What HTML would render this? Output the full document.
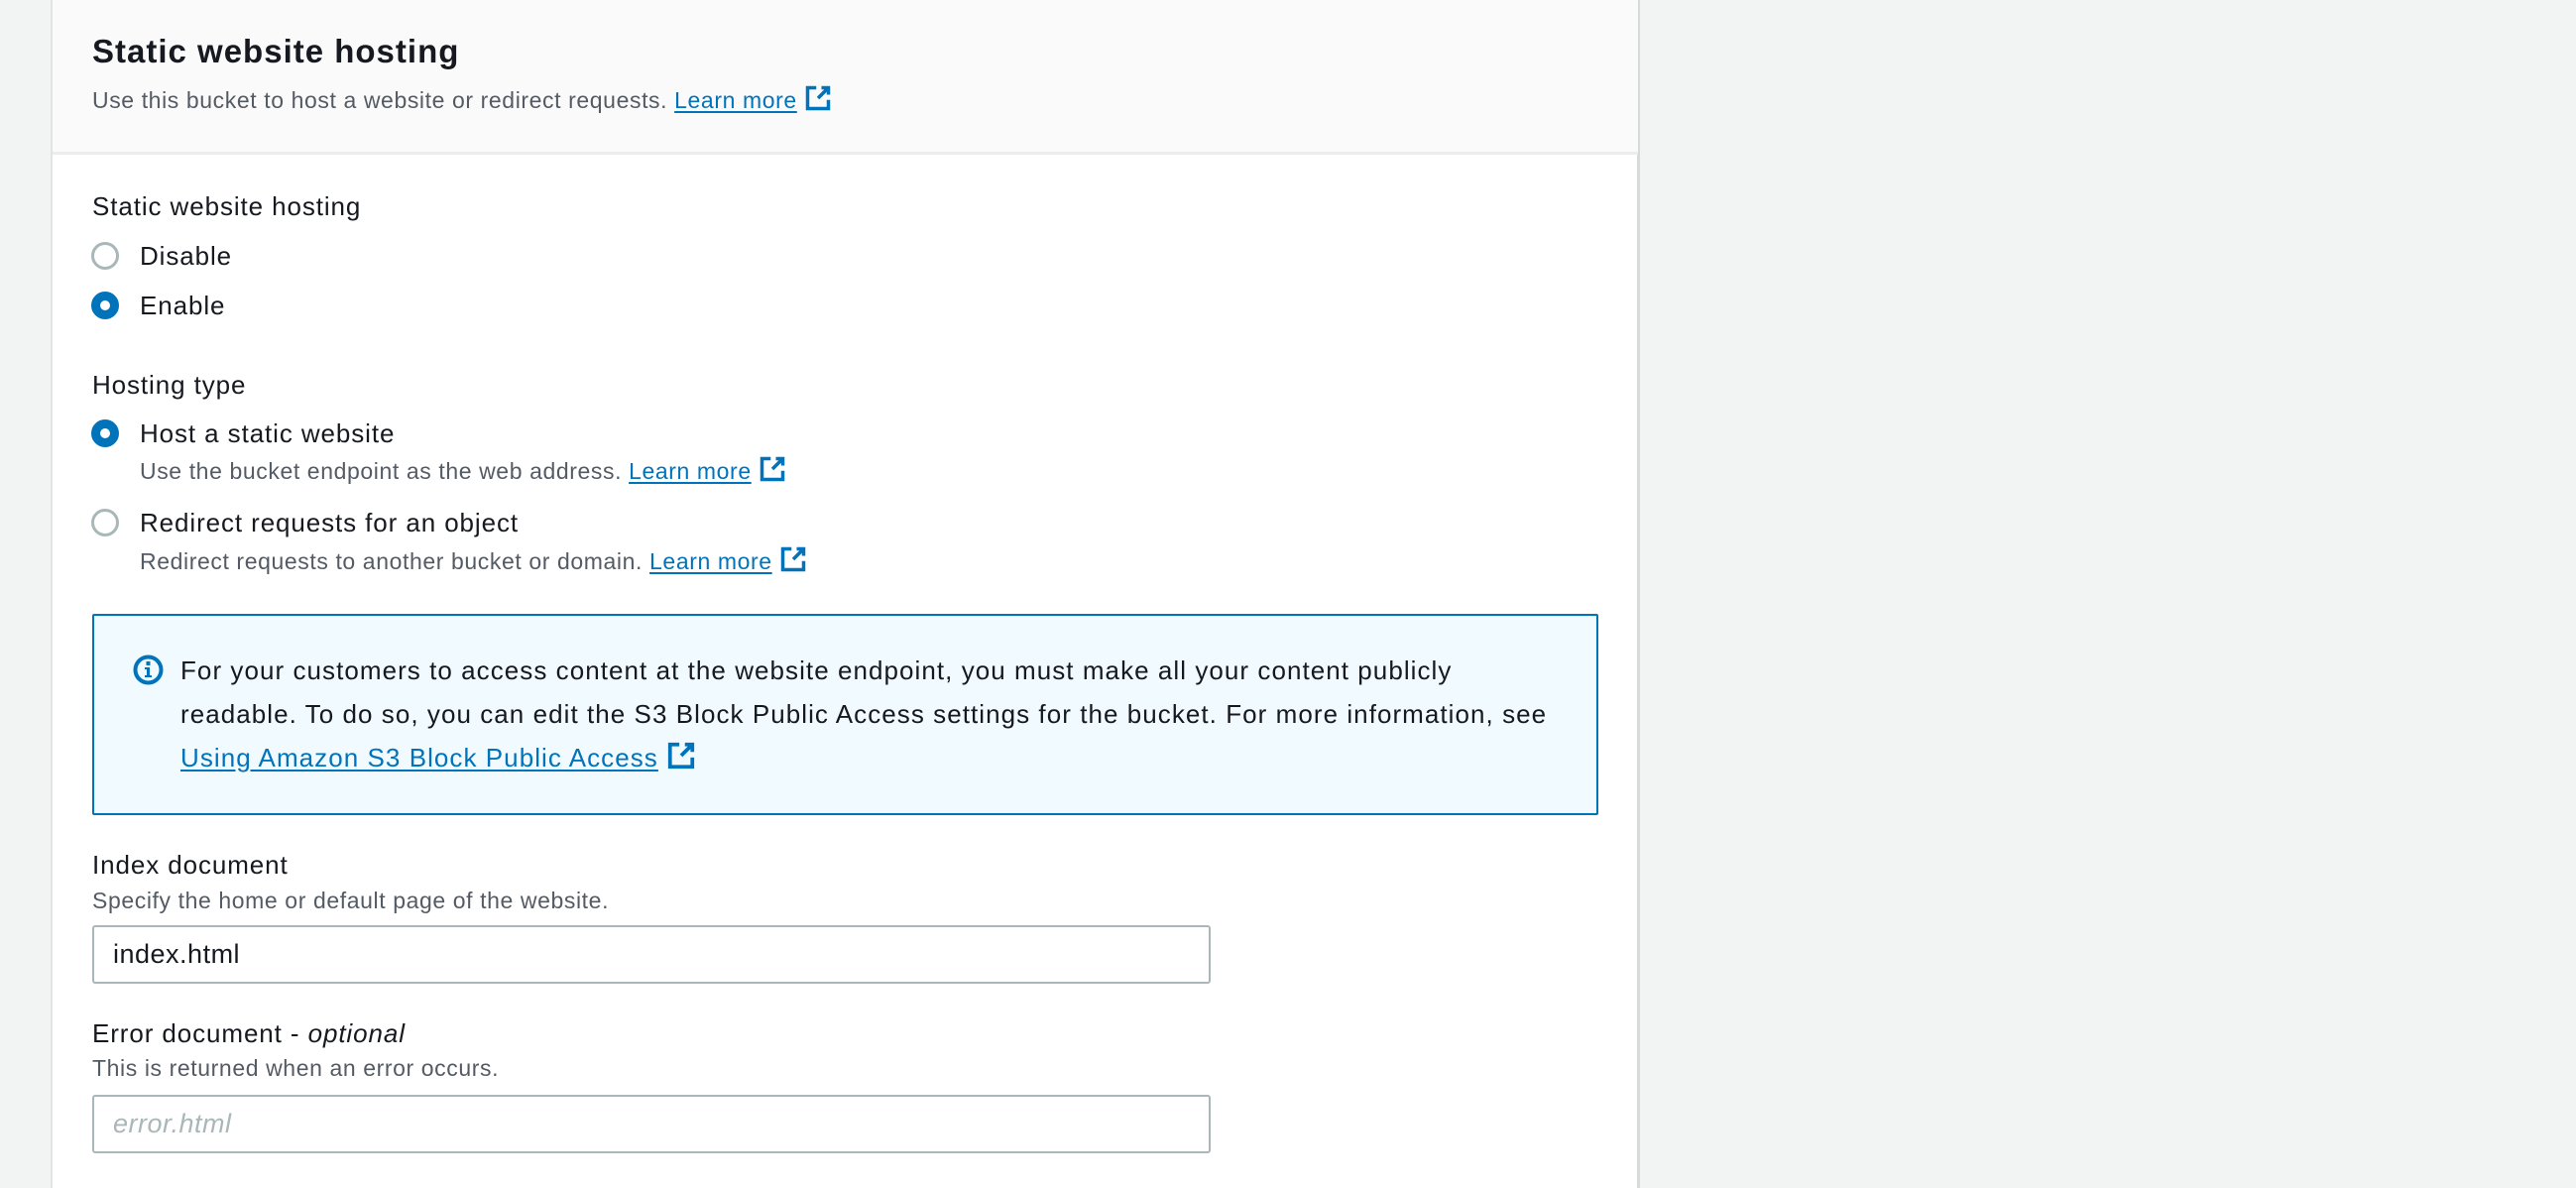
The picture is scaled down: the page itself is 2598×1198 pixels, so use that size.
<!DOCTYPE html>
<html><head><meta charset="utf-8"><style>
*{margin:0;padding:0;box-sizing:border-box}
body{width:2598px;height:1188px;background:#f2f3f3;font-family:"Liberation Sans",sans-serif;color:#16191f;position:relative;overflow:hidden}
.panel{position:absolute;left:51px;top:-2px;width:1603px;height:1200px;background:#fff;border-left:2px solid #e1e4e4;border-right:3px solid #d5dbdb}
.head{position:absolute;left:0;top:0;width:100%;height:156px;background:#fafafa;border-bottom:3px solid #eaeded}
.t{position:absolute;white-space:nowrap;letter-spacing:0.9px}
.g{color:#545b64;letter-spacing:0.6px}
a{color:#0073bb;text-decoration:underline;text-underline-offset:3px}
.r{position:absolute;width:28px;height:28px;border-radius:50%;border:3px solid #aab7b8;background:#fff}
.r.on{border:9px solid #0073bb}
.inp{position:absolute;left:93px;width:1128px;height:59px;border:2px solid #aab7b8;border-radius:3px;background:#fff;font-size:27px;padding-left:19px;line-height:55px;letter-spacing:0.5px}
</style></head><body>
<div class="panel"></div>
<div class="head" style="left:53px;width:1599px"></div>
<div class="t" style="left:93px;top:33px;font-size:33px;font-weight:bold;letter-spacing:1px">Static website hosting</div>
<div class="t g" style="left:93px;top:85px;font-size:23px">Use this bucket to host a website or redirect requests. <a>Learn more</a> <svg width="28" height="28" viewBox="0 0 16 16" style="vertical-align:-4px"><path d="M10 2h4v4M14 2L8 8M7 2H2v12h12V9" fill="none" stroke="#0073bb" stroke-width="2"/></svg></div>

<div class="t" style="left:93px;top:193px;font-size:26px">Static website hosting</div>
<div class="r" style="left:92px;top:244px"></div>
<div class="t" style="left:141px;top:243px;font-size:26px">Disable</div>
<div class="r on" style="left:92px;top:294px"></div>
<div class="t" style="left:141px;top:293px;font-size:26px">Enable</div>

<div class="t" style="left:93px;top:373px;font-size:26px">Hosting type</div>
<div class="r on" style="left:92px;top:423px"></div>
<div class="t" style="left:141px;top:422px;font-size:26px">Host a static website</div>
<div class="t g" style="left:141px;top:459px;font-size:23px">Use the bucket endpoint as the web address. <a>Learn more</a> <svg width="28" height="28" viewBox="0 0 16 16" style="vertical-align:-4px"><path d="M10 2h4v4M14 2L8 8M7 2H2v12h12V9" fill="none" stroke="#0073bb" stroke-width="2"/></svg></div>
<div class="r" style="left:92px;top:513px"></div>
<div class="t" style="left:141px;top:512px;font-size:26px">Redirect requests for an object</div>
<div class="t g" style="left:141px;top:550px;font-size:23px">Redirect requests to another bucket or domain. <a>Learn more</a> <svg width="28" height="28" viewBox="0 0 16 16" style="vertical-align:-4px"><path d="M10 2h4v4M14 2L8 8M7 2H2v12h12V9" fill="none" stroke="#0073bb" stroke-width="2"/></svg></div>

<div style="position:absolute;left:93px;top:619px;width:1519px;height:203px;background:#f1faff;border:2px solid #0073bb;border-radius:2px"></div>
<svg style="position:absolute;left:134px;top:660px" width="31" height="31" viewBox="0 0 31 31"><circle cx="15.5" cy="15.5" r="13" fill="none" stroke="#0073bb" stroke-width="4"/><rect x="13.5" y="7" width="4" height="4" fill="#0073bb"/><path d="M12 13h5v8h2v2h-7v-2h2v-6h-2z" fill="#0073bb"/></svg>
<div class="t" style="left:182px;top:654px;font-size:26px;line-height:44px;letter-spacing:1.05px">For your customers to access content at the website endpoint, you must make all your content publicly<br>readable. To do so, you can edit the S3 Block Public Access settings for the bucket. For more information, see<br><a>Using Amazon S3 Block Public Access</a> <svg width="30" height="30" viewBox="0 0 16 16" style="vertical-align:-4px"><path d="M10 2h4v4M14 2L8 8M7 2H2v12h12V9" fill="none" stroke="#0073bb" stroke-width="2"/></svg></div>

<div class="t" style="left:93px;top:857px;font-size:26px">Index document</div>
<div class="t g" style="left:93px;top:895px;font-size:23px">Specify the home or default page of the website.</div>
<div class="inp" style="top:933px">index.html</div>

<div class="t" style="left:93px;top:1027px;font-size:26px">Error document - <i>optional</i></div>
<div class="t g" style="left:93px;top:1064px;font-size:23px">This is returned when an error occurs.</div>
<div class="inp" style="top:1104px;color:#aab7b8;font-style:italic">error.html</div>
</body></html>
